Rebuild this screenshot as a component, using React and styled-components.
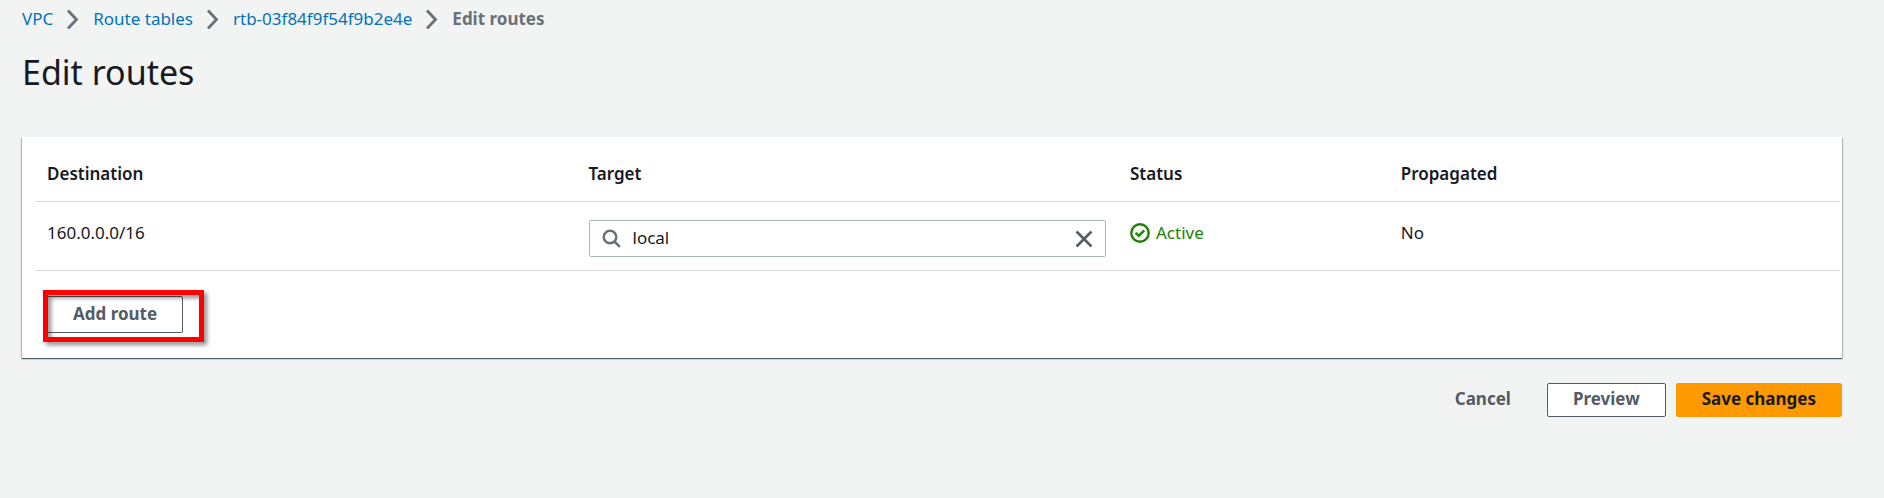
import React, { useState } from "react";
import styled, { createGlobalStyle } from "styled-components";

const GlobalStyle = createGlobalStyle`
  *, *::before, *::after { box-sizing: border-box; }
  body {
    margin: 0;
    background: #f2f3f3;
    color: #16191f;
    font-family: "Noto Sans", "Open Sans", sans-serif;
    font-size: 17px;
    line-height: 26px;
  }
`;

const Page = styled.div`
  padding: 6px 42px 24px 22px;
`;

const Crumbs = styled.ol`
  display: flex;
  align-items: center;
  gap: 13px;
  margin: 0;
  padding: 0;
  list-style: none;
`;

const Crumb = styled.li`
  display: flex;
  align-items: center;
  gap: 13px;
`;

const CrumbLink = styled.a`
  color: #0073bb;
  text-decoration: none;
`;

const CrumbCurrent = styled.span`
  color: #687078;
  font-weight: 700;
`;

const Icon = styled.svg`
  display: block;
  flex: none;
  fill: none;
  stroke: currentColor;
`;

const ChevronIcon = styled(Icon)`
  color: #687078;
`;

const Title = styled.h1`
  margin: 19px 0 44px;
  font-size: 34px;
  line-height: 42px;
  font-weight: 400;
`;

const Card = styled.section`
  padding: 24px 2px 25px 13px;
  background: #fff;
  box-shadow: 0 1px 1px 0 rgba(0, 28, 36, 0.5), 1px 1px 1px 0 rgba(0, 28, 36, 0.2),
    -1px 1px 1px 0 rgba(0, 28, 36, 0.2);
`;

const RoutesTable = styled.table`
  width: 100%;
  table-layout: fixed;
  border-collapse: separate;
  border-spacing: 0;
  text-align: left;
`;

const HeadCell = styled.th`
  width: ${(p) => p.$width};
  padding: 0 12px 14px;
  border-bottom: 1px solid #d9dbdc;
  font-weight: 600;
`;

const Cell = styled.td`
  padding: 18px 12px 13px;
  border-bottom: 1px solid #d9dbdc;
  vertical-align: top;
`;

const SearchBox = styled.div`
  display: flex;
  align-items: center;
  gap: 12px;
  height: 37px;
  padding: 0 12px;
  border: 1px solid #aab7b8;
  border-radius: 2px;
  color: #687078;
`;

const SearchInput = styled.input`
  flex: 1;
  min-width: 0;
  padding: 0 0 2px;
  border: 0;
  outline: 0;
  background: none;
  color: #16191f;
  font: inherit;
`;

const ClearButton = styled.button`
  padding: 0;
  border: 0;
  background: none;
  color: #545b64;
  cursor: pointer;
`;

const Status = styled.span`
  display: flex;
  align-items: center;
  gap: 6px;
  color: #1d8102;
`;

const buttonColors = {
  normal: { background: "#fff", border: "#545b64", text: "#545b64" },
  primary: { background: "#f90", border: "#f90", text: "#16191f" },
  link: { background: "transparent", border: "transparent", text: "#545b64" },
};

const Button = styled.button`
  height: ${(p) => (p.$tall ? 37 : 34)}px;
  padding: 0 25px 2px;
  border: 1px solid ${(p) => buttonColors[p.$kind].border};
  border-radius: 2px;
  background: ${(p) => buttonColors[p.$kind].background};
  color: ${(p) => buttonColors[p.$kind].text};
  font: inherit;
  font-weight: 700;
  cursor: pointer;
`;

const AddArea = styled.div`
  display: flex;
  padding: 25px 12px 0;
`;

const Highlighted = styled.div`
  position: relative;
  display: flex;
`;

const Highlight = styled.span`
  position: absolute;
  inset: -6px -21px -9px -4px;
  border: 5px solid #f00;
  filter: drop-shadow(3px 3px 2px rgba(0, 0, 0, 0.45));
  pointer-events: none;
`;

const Actions = styled.div`
  display: flex;
  justify-content: flex-end;
  gap: 10px;
  margin-top: 25px;
`;

const Chevron = () => (
  <ChevronIcon width="14" height="20" viewBox="0 0 14 20" strokeWidth="2.8" aria-hidden="true">
    <path d="M2 1.5l8.5 9-8.5 9" />
  </ChevronIcon>
);

const trail = ["VPC", "Route tables", "rtb-03f84f9f54f9b2e4e"];

export default function App() {
  const [target, setTarget] = useState("local");
  return (
    <>
      <GlobalStyle />
      <Page>
        <nav aria-label="Breadcrumbs">
          <Crumbs>
            {trail.map((name) => (
              <Crumb key={name}>
                <CrumbLink href="#">{name}</CrumbLink>
                <Chevron />
              </Crumb>
            ))}
            <Crumb>
              <CrumbCurrent aria-current="page">Edit routes</CrumbCurrent>
            </Crumb>
          </Crumbs>
        </nav>
        <main>
          <Title>Edit routes</Title>
          <Card>
            <RoutesTable>
              <thead>
                <tr>
                  <HeadCell $width="30%">Destination</HeadCell>
                  <HeadCell $width="30%" id="target-heading">Target</HeadCell>
                  <HeadCell $width="15%">Status</HeadCell>
                  <HeadCell $width="25%">Propagated</HeadCell>
                </tr>
              </thead>
              <tbody>
                <tr>
                  <Cell>160.0.0.0/16</Cell>
                  <Cell>
                    <SearchBox>
                      <Icon width="19" height="19" viewBox="0 0 19 19" strokeWidth="2.5" aria-hidden="true">
                        <circle cx="8" cy="8" r="6.3" />
                        <path d="M12.5 12.5l5.3 5.3" />
                      </Icon>
                      <SearchInput
                        aria-labelledby="target-heading"
                        value={target}
                        onChange={(e) => setTarget(e.target.value)}
                      />
                      <ClearButton type="button" aria-label="Clear target" onClick={() => setTarget("")}>
                        <Icon width="18" height="18" viewBox="0 0 18 18" strokeWidth="2.5">
                          <path d="M1.5 1.5l15 15M16.5 1.5l-15 15" />
                        </Icon>
                      </ClearButton>
                    </SearchBox>
                  </Cell>
                  <Cell>
                    <Status>
                      <Icon width="20" height="20" viewBox="0 0 20 20" strokeWidth="2.4" aria-hidden="true">
                        <circle cx="10" cy="10" r="8.7" />
                        <path d="M5.6 9.8l3.2 3.1 5.4-5.5" />
                      </Icon>
                      Active
                    </Status>
                  </Cell>
                  <Cell>No</Cell>
                </tr>
              </tbody>
            </RoutesTable>
            <AddArea>
              <Highlighted>
                <Button type="button" $kind="normal" $tall>Add route</Button>
                <Highlight />
              </Highlighted>
            </AddArea>
          </Card>
          <Actions>
            <Button type="button" $kind="link">Cancel</Button>
            <Button type="button" $kind="normal">Preview</Button>
            <Button type="submit" $kind="primary">Save changes</Button>
          </Actions>
        </main>
      </Page>
    </>
  );
}
